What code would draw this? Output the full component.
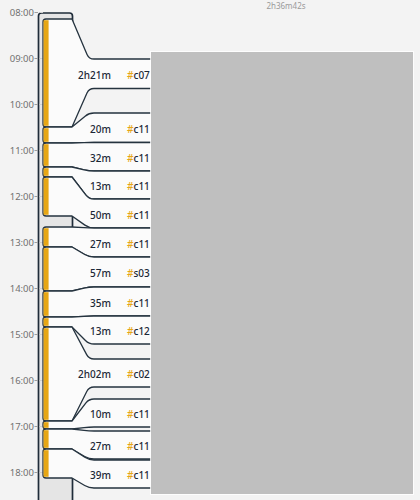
import React from "react";

// Day timeline: left column is the time scale, each activity fans out to a fixed-height row.
const segs = [
  { d: "2h21m", id: "c07", l: [19, 127], r: [59, 88.5] },
  { d: "20m", id: "c11", l: [127, 143], r: [113, 142.5] },
  { d: "32m", id: "c11", l: [143, 167], r: [142.5, 171] },
  { d: "13m", id: "c11", l: [167, 177], r: [171, 199] },
  { d: "50m", id: "c11", l: [177, 216], r: [199, 228] },
  { d: "27m", id: "c11", l: [227, 247], r: [228, 257] },
  { d: "57m", id: "s03", l: [247, 291], r: [257, 287] },
  { d: "35m", id: "c11", l: [291, 317], r: [287, 316] },
  { d: "13m", id: "c12", l: [317, 327], r: [316, 344] },
  { d: "2h02m", id: "c02", l: [327, 421], r: [359, 387] },
  { d: "10m", id: "c11", l: [421, 429], r: [399, 427] },
  { d: "27m", id: "c11", l: [429, 449], r: [431, 459] },
  { d: "39m", id: "c11", l: [449, 478], r: [460, 488] },
];

const hours = ["08:00", "09:00", "10:00", "11:00", "12:00", "13:00", "14:00", "15:00", "16:00", "17:00", "18:00"];

const XL = 43;
const XR = 72;
const XC = 89;
const XE = 412;

function toward(x0, y0, xc, yc, r) {
  const dx = x0 - xc;
  const dy = y0 - yc;
  const len = Math.hypot(dx, dy) || 1;
  const k = Math.min(r, len / 2) / len;
  return `${(xc + dx * k).toFixed(2)},${(yc + dy * k).toFixed(2)}`;
}

function segPath({ l: [a, b], r: [c, d] }) {
  const r = 3;
  const rb = 5;
  return [
    `M${XL},${a + r}`,
    `Q${XL},${a} ${XL + r},${a}`,
    `L${XR},${a}`,
    `L${toward(XR, a, XC, c, rb)}`,
    `Q${XC},${c} ${XC + rb},${c}`,
    `L${XE},${c}`,
    `L${XE},${d}`,
    `L${XC + rb},${d}`,
    `Q${XC},${d} ${toward(XR, b, XC, d, rb)}`,
    `L${XR},${b}`,
    `L${XL + r},${b}`,
    `Q${XL},${b} ${XL},${b - r}`,
    "Z",
  ].join(" ");
}

export default function App() {
  const font = '"Noto Sans", "Open Sans", sans-serif';
  return (
    <div className="relative w-[420px] h-[500px] overflow-hidden bg-[#f3f3f3]">
      <svg width="420" height="500" className="block" style={{ fontFamily: font }}>
        <text x="286" y="5" textAnchor="middle" dominantBaseline="central" fontSize="8" fill="#9a9a9a">
          2h36m42s
        </text>

        <path
          d="M38.5,520 L38.5,16 Q38.5,13 41.5,13 L69.5,13 Q72.5,13 72.5,16 L72.5,520"
          fill="#e5e5e5"
          stroke="#1f2c39"
          strokeWidth="1.7"
        />

        {hours.map((h, i) => {
          const y = 12.5 + i * 46;
          return (
            <g key={h}>
              <text x="34" y={y} textAnchor="end" dominantBaseline="central" fontSize="9.5" fill="#707070">
                {h}
              </text>
              <line x1="34.5" x2="38" y1={y} y2={y} stroke="#a0a0a0" strokeWidth="1" />
              <line x1="39.5" x2="43" y1={y} y2={y} stroke="#cfcfcf" strokeWidth="1" />
            </g>
          );
        })}

        {segs.map((s, i) => (
          <path key={i} d={segPath(s)} fill="#fbfbfb" stroke="#25333f" strokeWidth="1.3" strokeLinejoin="round" />
        ))}

        {segs.map((s, i) => (
          <g key={`r${i}`}>
            <rect x="43.6" y={s.l[0] + 1.2} width="5" height={s.l[1] - s.l[0] - 2.4} fill="#e6a614" />
            <text
              x="111"
              y={(s.r[0] + s.r[1]) / 2 + 1}
              textAnchor="end"
              dominantBaseline="central"
              fontSize="10"
              fontWeight="500"
              fill="#1c2836"
            >
              {s.d}
            </text>
            <text
              x="127"
              y={(s.r[0] + s.r[1]) / 2 + 1}
              dominantBaseline="central"
              fontSize="10"
              fontWeight="500"
              fill="#1c2836"
            >
              <tspan fill="#e6a614">#</tspan>
              {s.id}
            </text>
          </g>
        ))}
      </svg>

      <div className="absolute left-[151px] top-[52px] w-[262px] h-[442px] bg-[#bfbfbf] ring-1 ring-white/80" />
    </div>
  );
}
